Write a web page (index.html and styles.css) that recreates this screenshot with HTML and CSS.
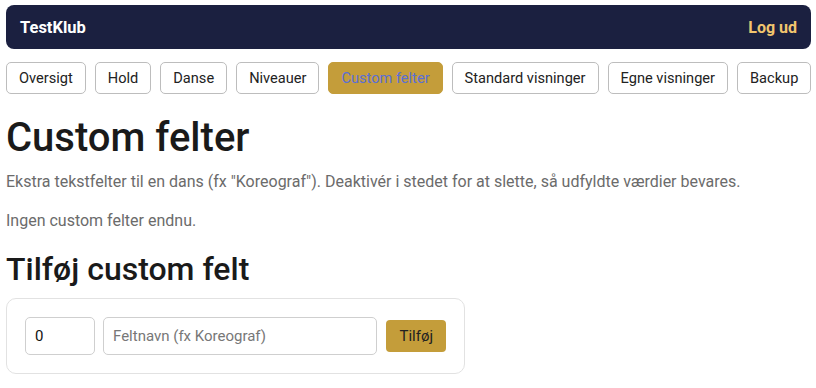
FILE: index.html
```html
<!DOCTYPE html>
<html>
<head>
    <meta name="viewport" content="width=device-width, initial-scale=1.0">
    <title>Custom felter - TestKlub</title>
    <link rel="stylesheet" href="styles.css">
</head>
<body>
    <header class="topbar">
        <span class="brand">TestKlub</span>
        <a class="logout" href="#">Log ud</a>
    </header>

    <nav class="tabs">
        <a class="tab" href="#">Oversigt</a>
        <a class="tab" href="#">Hold</a>
        <a class="tab" href="#">Danse</a>
        <a class="tab" href="#">Niveauer</a>
        <a class="tab active" href="#">Custom felter</a>
        <a class="tab" href="#">Standard visninger</a>
        <a class="tab" href="#">Egne visninger</a>
        <a class="tab" href="#">Backup</a>
    </nav>

    <h1>Custom felter</h1>
    <p class="muted">Ekstra tekstfelter til en dans (fx "Koreograf"). Deaktivér i stedet for at slette, så udfyldte værdier bevares.</p>
    <p class="muted">Ingen custom felter endnu.</p>

    <h2>Tilføj custom felt</h2>
    <form class="card" onsubmit="return false">
        <input class="sort" type="number" value="0">
        <input class="name" type="text" placeholder="Feltnavn (fx Koreograf)">
        <button class="add" type="submit">Tilføj</button>
    </form>
</body>
</html>
```

FILE: styles.css
```css
body {
    font-family: Roboto, "Noto Sans", Arial, sans-serif;
    margin: 0;
    padding: 5px 5px 0 6px;
    color: #1a1a1a;
    background: #fff;
}
.topbar {
    background: #1b2040;
    color: white;
    height: 44px;
    border-radius: 8px;
    display: flex;
    align-items: center;
    justify-content: space-between;
    padding: 0 14px;
}
.brand {
    font-weight: bold;
    font-size: 16.5px;
}
.logout {
    color: #f2c56e;
    font-weight: bold;
    font-size: 16px;
    text-decoration: none;
}
.tabs {
    display: flex;
    gap: 9px;
    margin-top: 13px;
}
.tab {
    display: block;
    flex-shrink: 0;
    white-space: nowrap;
    height: 32px;
    line-height: 30px;
    box-sizing: border-box;
    padding: 0 12px;
    border: 1px solid #bdbdbd;
    border-radius: 5px;
    color: #222;
    font-size: 14.6px;
    text-decoration: none;
    background: white;
}
.tab.active {
    background: #c49d3a;
    border-color: #c49d3a;
    color: #5b6fd6;
}
h1 {
    font-size: 40px;
    font-weight: 500;
    margin: 20px 0 10px;
    line-height: 1.2;
}
h2 {
    font-size: 32px;
    font-weight: 500;
    margin: 18px 0 10px;
    line-height: 1.2;
}
.muted {
    color: #6b6b6b;
    font-size: 16px;
    margin: 0 0 20px;
}
.card {
    width: 421px;
    border: 1px solid #e2e2e2;
    border-radius: 10px;
    padding: 18px;
    display: flex;
    align-items: center;
    gap: 8px;
}
.card input {
    height: 38px;
    box-sizing: border-box;
    border: 1px solid #cfcfcf;
    border-radius: 5px;
    font-family: inherit;
    font-size: 15px;
    padding: 0 9px;
    color: #111;
}
.sort {
    width: 70px;
}
.name {
    width: 275px;
    margin-right: 1px;
}
.name::placeholder {
    color: #777;
}
.add {
    height: 32px;
    padding: 0 13px;
    border: none;
    border-radius: 4px;
    background: #c49d3a;
    color: #222;
    font-family: inherit;
    font-size: 15px;
}
```
